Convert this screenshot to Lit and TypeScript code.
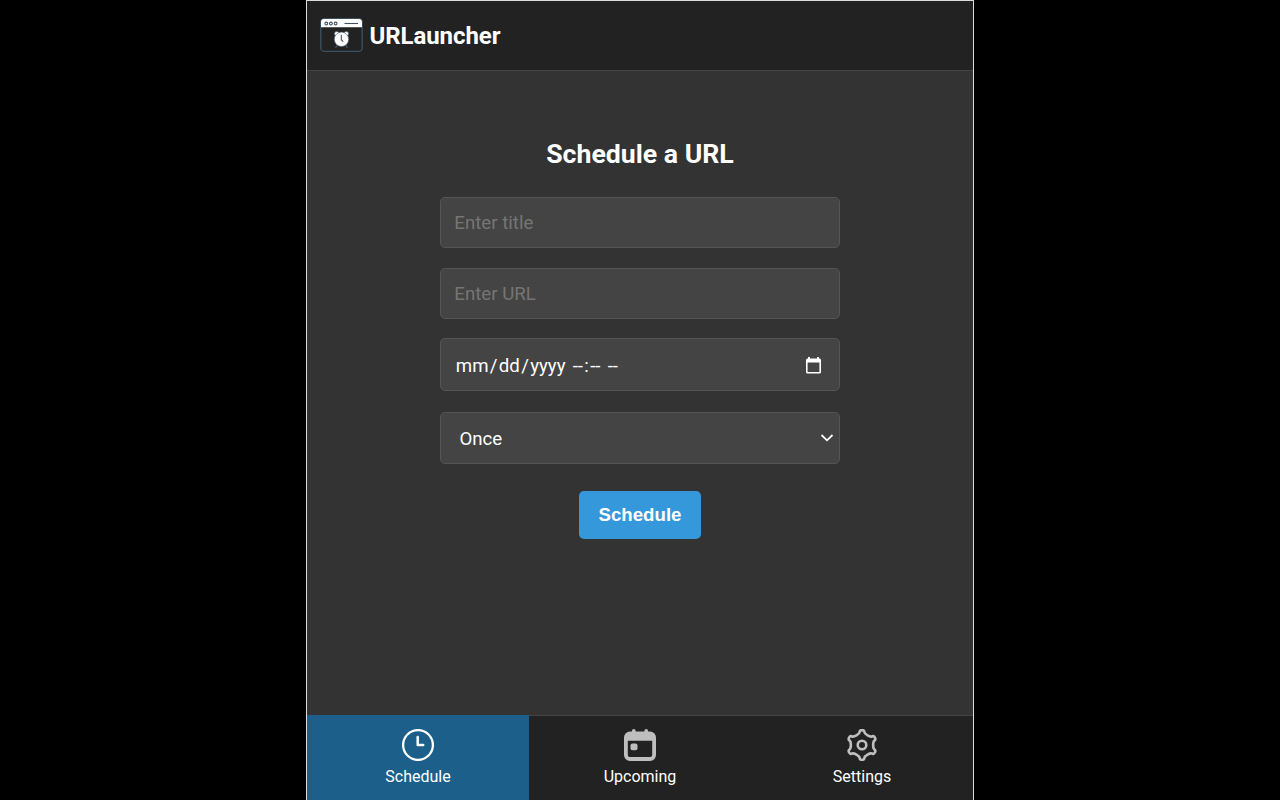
import { LitElement, html, css, svg } from "lit";
import { customElement, state } from "lit/decorators.js";

// Outline of a six-lobed cog centred on (16, 16).
function cogPath(): string {
  const at = (k: number, u: number, v: number) => {
    const a = (k * Math.PI) / 3;
    const x = 16 + u * Math.cos(a) + v * Math.sin(a);
    const y = 16 + u * Math.sin(a) - v * Math.cos(a);
    return `${x.toFixed(2)} ${y.toFixed(2)}`;
  };
  let d = `M${at(0, -2.4, 12.9)}`;
  for (let k = 0; k < 6; k++) {
    d += `C${at(k, -2.6, 15.6)} ${at(k, 2.6, 15.6)} ${at(k, 2.4, 12.9)}`;
    d += `C${at(k, 2.6, 10.9)} ${at(k + 1, -2.6, 10.9)} ${at(k + 1, -2.4, 12.9)}`;
  }
  return d + "Z";
}

const logo = svg`<svg class="logo" width="43" height="34" viewBox="0 0 43 34">
  <rect x=".8" y=".8" width="41.4" height="32.6" rx="3.5" fill="none" stroke="#3b4f60" stroke-width="1.4"/>
  <path d="M1 9.2V4Q1 1 4 1H39Q42 1 42 4V9.2Z" fill="#fff"/>
  <g fill="#fff" stroke="#3f5263" stroke-width="1.1">
    <circle cx="6.3" cy="5.5" r="1.4"/><circle cx="10.9" cy="5.5" r="1.4"/><circle cx="15.6" cy="5.5" r="1.4"/>
  </g>
  <path d="M24.5 5.5H38" stroke="#3f5263" stroke-width="1.1"/>
  <path d="M17.2 27.5L15.5 29.8M25.8 27.5L27.5 29.8" stroke="#3f5263" stroke-width="1.4"/>
  <g fill="#fff" stroke="#52667a" stroke-width=".6"><circle cx="16.7" cy="15.8" r="2.3"/><circle cx="26.3" cy="15.8" r="2.3"/></g>
  <circle cx="21.5" cy="21.3" r="7.2" fill="#fff" stroke="#3f5263" stroke-width=".6"/>
  <path d="M21.3 16.8V21.7L23.2 23.7" fill="none" stroke="#3f5263" stroke-width="1.1"/>
</svg>`;

const icons: Record<string, unknown> = {
  Schedule: svg`<svg width="32" height="32" viewBox="0 0 32 32" fill="none" stroke="#fff">
    <circle cx="16" cy="16" r="14.9" stroke-width="2.3"/>
    <path d="M15.7 8V16H21.2" stroke-width="2.5" stroke-linecap="round" stroke-linejoin="round"/>
  </svg>`,
  Upcoming: svg`<svg width="32" height="32" viewBox="0 0 32 32" fill="#bfbfbf">
    <path fill-rule="evenodd" d="M8 2V1.8A1.8 1.8 0 0 1 11.6 1.8V2.4H20.4V1.8A1.8 1.8 0 0 1 24 1.8V2.4H26A6 6 0 0 1 32 8.4V26A6 6 0 0 1 26 32H6A6 6 0 0 1 0 26V8.4A6 6 0 0 1 6 2.4H8ZM3.8 11.8V25.5A2.6 2.6 0 0 0 6.4 28.1H25.6A2.6 2.6 0 0 0 28.2 25.5V11.8Z"/>
    <rect x="6.5" y="14.5" width="7" height="6.7" rx="2"/>
  </svg>`,
  Settings: svg`<svg width="32" height="32" viewBox="0 0 32 32" fill="none" stroke="#bfbfbf" stroke-width="2.6">
    <path d=${cogPath()}/>
    <circle cx="16" cy="16" r="4.3"/>
  </svg>`,
};

@customElement("app-root")
export class AppRoot extends LitElement {
  @state() private tab = "Schedule";

  static styles = css`
    :host { display: flex; justify-content: center; height: 800px; background: #000; color: #fff; font-family: Roboto, sans-serif; overflow: hidden; }
    * { box-sizing: border-box; }
    svg { display: block; flex: none; }
    .panel { width: 668px; height: 800px; display: flex; flex-direction: column; background: #333; border: 1px solid #dcdcdc; border-bottom: 0; }
    .bar { height: 70px; flex: none; display: flex; align-items: center; gap: 7px; padding: 0 13px; background: #222; border-bottom: 1px solid #444; }
    .logo { margin-bottom: 2px; }
    .brand { font-size: 24px; font-weight: 700; line-height: 30px; letter-spacing: -0.05px; margin-left: -0.6px; }
    .main { flex: 1; display: flex; flex-direction: column; align-items: center; padding-top: 67px; }
    .title { margin: 0 0 27px; font-size: 26.67px; line-height: 32px; font-weight: 700; }
    .field { width: 400px; height: 51px; flex: none; display: flex; align-items: center; justify-content: space-between; margin: 0 0 20px; padding: 0 13.3px; background: #444; border: 1px solid #555; border-radius: 5px; color: #fff; font: 18.67px Roboto, sans-serif; outline: 0; }
    .field::placeholder { color: #757575; opacity: 1; }
    .date { height: 53px; margin: -1px 0 21px; padding: 3px 18px 0 13.5px; }
    .date svg { margin-bottom: 1px; }
    .seg { padding: 0 1.3px; }
    .select { height: 52px; padding: 1px 5px 0 18.4px; margin-bottom: 27px; }
    .select svg { margin-bottom: 1px; }
    .submit { width: 122.5px; height: 48px; padding: 0; border: 0; border-radius: 5px; background: #3498db; color: #fff; font: 700 18.67px "Liberation Sans", Arial, sans-serif; }
    .nav { height: 85px; flex: none; display: grid; grid-template-columns: repeat(3, 1fr); background: #222; border-top: 1px solid #444; }
    .tab { display: flex; flex-direction: column; align-items: center; gap: 5px; padding-top: 13px; font-size: 16px; line-height: 21px; }
    .active { background: #1b5f8a; margin-top: -1px; padding-top: 14px; }
  `;

  render() {
    return html`<div class="panel">
      <header class="bar">${logo}<span class="brand">URLauncher</span></header>
      <main class="main">
        <h2 class="title">Schedule a URL</h2>
        <input class="field" placeholder="Enter title" />
        <input class="field" placeholder="Enter URL" />
        <div class="field date"><span><span class="seg">mm</span>/<span class="seg">dd</span>/<span class="seg">yyyy</span> <span class="seg">--</span>:<span class="seg">--</span> <span class="seg">--</span></span>
          <svg width="15" height="17" viewBox="0 0 15 17"><path fill="#fff" fill-rule="evenodd" d="M2 0H4V1.5H11V0H13V1.5H13.5Q15 1.5 15 3V15Q15 16.5 13.5 16.5H1.5Q0 16.5 0 15V3Q0 1.5 1.5 1.5H2ZM1.6 5.5V15H13.4V5.5Z"/></svg>
        </div>
        <div class="field select"><span>Once</span>
          <svg width="14" height="10" viewBox="0 0 14 10" fill="none" stroke="#fff" stroke-width="1.8"><path d="M1.5 2L7 7.3L12.5 2"/></svg>
        </div>
        <button class="submit">Schedule</button>
      </main>
      <nav class="nav">
        ${["Schedule", "Upcoming", "Settings"].map(
          (t) => html`<div class="tab ${t === this.tab ? "active" : ""}" @click=${() => (this.tab = t)}>${icons[t]}<span>${t}</span></div>`
        )}
      </nav>
    </div>`;
  }
}
